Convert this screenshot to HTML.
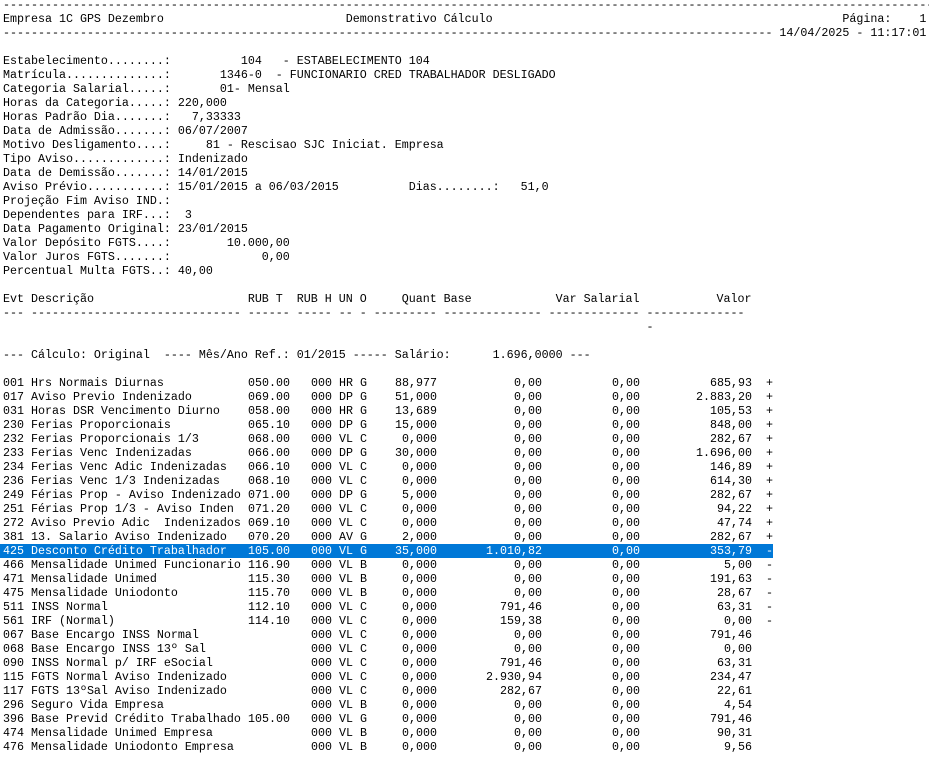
<!DOCTYPE html>
<html><head><meta charset="utf-8"><style>
html,body{margin:0;padding:0;background:#fff;}
body{width:929px;height:757px;overflow:hidden;position:relative;font-family:"Liberation Mono",monospace;font-size:11.67px;color:#000;}
pre{margin:0;font:inherit;position:absolute;left:3px;top:-2px;line-height:14px;white-space:pre;}
.r{position:absolute;left:0;width:929px;height:14px;line-height:14px;white-space:pre;}
.r span{position:absolute;top:0;}
.a{left:3px}.b{left:248px}.c{left:311px}
.q{right:492px;text-align:right}.s{right:387px;text-align:right}.v{right:289px;text-align:right}.w{right:177px;text-align:right}.g{left:766px}
.hl{color:#fff;}
.hlbg{position:absolute;left:0;top:544px;width:773px;height:14px;background:#0078d7;}
</style></head><body>
<pre>-------------------------------------------------------------------------------------------------------------------------------------
Empresa 1C GPS Dezembro                          Demonstrativo Cálculo                                                  Página:    1
-------------------------------------------------------------------------------------------------------------- 14/04/2025 - 11:17:01

Estabelecimento........:          104   - ESTABELECIMENTO 104
Matrícula..............:       1346-0  - FUNCIONARIO CRED TRABALHADOR DESLIGADO
Categoria Salarial.....:       01- Mensal
Horas da Categoria.....: 220,000
Horas Padrão Dia.......:   7,33333
Data de Admissão.......: 06/07/2007
Motivo Desligamento....:     81 - Rescisao SJC Iniciat. Empresa
Tipo Aviso.............: Indenizado
Data de Demissão.......: 14/01/2015
Aviso Prévio...........: 15/01/2015 a 06/03/2015          Dias........:   51,0
Projeção Fim Aviso IND.:
Dependentes para IRF...:  3
Data Pagamento Original: 23/01/2015
Valor Depósito FGTS....:        10.000,00
Valor Juros FGTS.......:             0,00
Percentual Multa FGTS..: 40,00

Evt Descrição                      RUB T  RUB H UN O     Quant Base            Var Salarial           Valor
--- ------------------------------ ------ ----- -- - --------- -------------- ------------- --------------
                                                                                            -

--- Cálculo: Original  ---- Mês/Ano Ref.: 01/2015 ----- Salário:      1.696,0000 ---
</pre>
<div class="hlbg"></div>
<div class="r" style="top:376px"><span class="a">001 Hrs Normais Diurnas</span><span class="b">050.00</span><span class="c">000 HR G</span><span class="q">88,977</span><span class="s">0,00</span><span class="v">0,00</span><span class="w">685,93</span><span class="g">+</span></div>
<div class="r" style="top:390px"><span class="a">017 Aviso Previo Indenizado</span><span class="b">069.00</span><span class="c">000 DP G</span><span class="q">51,000</span><span class="s">0,00</span><span class="v">0,00</span><span class="w">2.883,20</span><span class="g">+</span></div>
<div class="r" style="top:404px"><span class="a">031 Horas DSR Vencimento Diurno</span><span class="b">058.00</span><span class="c">000 HR G</span><span class="q">13,689</span><span class="s">0,00</span><span class="v">0,00</span><span class="w">105,53</span><span class="g">+</span></div>
<div class="r" style="top:418px"><span class="a">230 Ferias Proporcionais</span><span class="b">065.10</span><span class="c">000 DP G</span><span class="q">15,000</span><span class="s">0,00</span><span class="v">0,00</span><span class="w">848,00</span><span class="g">+</span></div>
<div class="r" style="top:432px"><span class="a">232 Ferias Proporcionais 1/3</span><span class="b">068.00</span><span class="c">000 VL C</span><span class="q">0,000</span><span class="s">0,00</span><span class="v">0,00</span><span class="w">282,67</span><span class="g">+</span></div>
<div class="r" style="top:446px"><span class="a">233 Ferias Venc Indenizadas</span><span class="b">066.00</span><span class="c">000 DP G</span><span class="q">30,000</span><span class="s">0,00</span><span class="v">0,00</span><span class="w">1.696,00</span><span class="g">+</span></div>
<div class="r" style="top:460px"><span class="a">234 Ferias Venc Adic Indenizadas</span><span class="b">066.10</span><span class="c">000 VL C</span><span class="q">0,000</span><span class="s">0,00</span><span class="v">0,00</span><span class="w">146,89</span><span class="g">+</span></div>
<div class="r" style="top:474px"><span class="a">236 Ferias Venc 1/3 Indenizadas</span><span class="b">068.10</span><span class="c">000 VL C</span><span class="q">0,000</span><span class="s">0,00</span><span class="v">0,00</span><span class="w">614,30</span><span class="g">+</span></div>
<div class="r" style="top:488px"><span class="a">249 Férias Prop - Aviso Indenizado</span><span class="b">071.00</span><span class="c">000 DP G</span><span class="q">5,000</span><span class="s">0,00</span><span class="v">0,00</span><span class="w">282,67</span><span class="g">+</span></div>
<div class="r" style="top:502px"><span class="a">251 Férias Prop 1/3 - Aviso Inden</span><span class="b">071.20</span><span class="c">000 VL C</span><span class="q">0,000</span><span class="s">0,00</span><span class="v">0,00</span><span class="w">94,22</span><span class="g">+</span></div>
<div class="r" style="top:516px"><span class="a">272 Aviso Previo Adic  Indenizados</span><span class="b">069.10</span><span class="c">000 VL C</span><span class="q">0,000</span><span class="s">0,00</span><span class="v">0,00</span><span class="w">47,74</span><span class="g">+</span></div>
<div class="r" style="top:530px"><span class="a">381 13. Salario Aviso Indenizado</span><span class="b">070.20</span><span class="c">000 AV G</span><span class="q">2,000</span><span class="s">0,00</span><span class="v">0,00</span><span class="w">282,67</span><span class="g">+</span></div>
<div class="r hl" style="top:544px"><span class="a">425 Desconto Crédito Trabalhador</span><span class="b">105.00</span><span class="c">000 VL G</span><span class="q">35,000</span><span class="s">1.010,82</span><span class="v">0,00</span><span class="w">353,79</span><span class="g">-</span></div>
<div class="r" style="top:558px"><span class="a">466 Mensalidade Unimed Funcionario</span><span class="b">116.90</span><span class="c">000 VL B</span><span class="q">0,000</span><span class="s">0,00</span><span class="v">0,00</span><span class="w">5,00</span><span class="g">-</span></div>
<div class="r" style="top:572px"><span class="a">471 Mensalidade Unimed</span><span class="b">115.30</span><span class="c">000 VL B</span><span class="q">0,000</span><span class="s">0,00</span><span class="v">0,00</span><span class="w">191,63</span><span class="g">-</span></div>
<div class="r" style="top:586px"><span class="a">475 Mensalidade Uniodonto</span><span class="b">115.70</span><span class="c">000 VL B</span><span class="q">0,000</span><span class="s">0,00</span><span class="v">0,00</span><span class="w">28,67</span><span class="g">-</span></div>
<div class="r" style="top:600px"><span class="a">511 INSS Normal</span><span class="b">112.10</span><span class="c">000 VL C</span><span class="q">0,000</span><span class="s">791,46</span><span class="v">0,00</span><span class="w">63,31</span><span class="g">-</span></div>
<div class="r" style="top:614px"><span class="a">561 IRF (Normal)</span><span class="b">114.10</span><span class="c">000 VL C</span><span class="q">0,000</span><span class="s">159,38</span><span class="v">0,00</span><span class="w">0,00</span><span class="g">-</span></div>
<div class="r" style="top:628px"><span class="a">067 Base Encargo INSS Normal</span><span class="c">000 VL C</span><span class="q">0,000</span><span class="s">0,00</span><span class="v">0,00</span><span class="w">791,46</span></div>
<div class="r" style="top:642px"><span class="a">068 Base Encargo INSS 13º Sal</span><span class="c">000 VL C</span><span class="q">0,000</span><span class="s">0,00</span><span class="v">0,00</span><span class="w">0,00</span></div>
<div class="r" style="top:656px"><span class="a">090 INSS Normal p/ IRF eSocial</span><span class="c">000 VL C</span><span class="q">0,000</span><span class="s">791,46</span><span class="v">0,00</span><span class="w">63,31</span></div>
<div class="r" style="top:670px"><span class="a">115 FGTS Normal Aviso Indenizado</span><span class="c">000 VL C</span><span class="q">0,000</span><span class="s">2.930,94</span><span class="v">0,00</span><span class="w">234,47</span></div>
<div class="r" style="top:684px"><span class="a">117 FGTS 13ºSal Aviso Indenizado</span><span class="c">000 VL C</span><span class="q">0,000</span><span class="s">282,67</span><span class="v">0,00</span><span class="w">22,61</span></div>
<div class="r" style="top:698px"><span class="a">296 Seguro Vida Empresa</span><span class="c">000 VL B</span><span class="q">0,000</span><span class="s">0,00</span><span class="v">0,00</span><span class="w">4,54</span></div>
<div class="r" style="top:712px"><span class="a">396 Base Previd Crédito Trabalhado</span><span class="b">105.00</span><span class="c">000 VL G</span><span class="q">0,000</span><span class="s">0,00</span><span class="v">0,00</span><span class="w">791,46</span></div>
<div class="r" style="top:726px"><span class="a">474 Mensalidade Unimed Empresa</span><span class="c">000 VL B</span><span class="q">0,000</span><span class="s">0,00</span><span class="v">0,00</span><span class="w">90,31</span></div>
<div class="r" style="top:740px"><span class="a">476 Mensalidade Uniodonto Empresa</span><span class="c">000 VL B</span><span class="q">0,000</span><span class="s">0,00</span><span class="v">0,00</span><span class="w">9,56</span></div>
</body></html>
